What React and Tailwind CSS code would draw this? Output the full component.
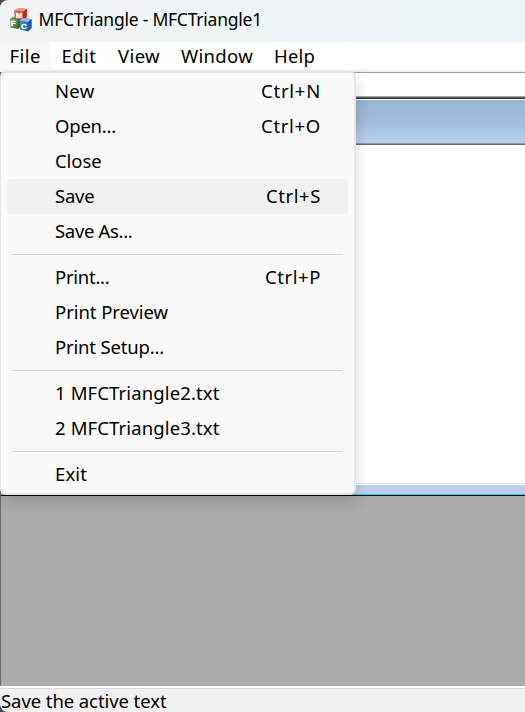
import { useLayoutEffect, useRef, useState } from 'react';

// Label whose letter spacing is adjusted so it occupies a set width.
function Label({ text, width, className = '' }) {
  const ref = useRef(null);
  const [spacing, setSpacing] = useState(0);
  useLayoutEffect(() => {
    const natural = ref.current.getBoundingClientRect().width;
    setSpacing((width - natural) / text.length);
  }, []);
  return (
    <span ref={ref} className={`whitespace-pre ${className}`} style={{ letterSpacing: `${spacing}px` }}>
      {text}
    </span>
  );
}

function AppIcon() {
  return (
    <svg width="24" height="26" viewBox="0 0 24 26" className="shrink-0">
      <defs>
        <linearGradient id="red" x1="0" y1="0" x2="1" y2="1">
          <stop offset="0" stopColor="#e06a52" />
          <stop offset="1" stopColor="#bd2d20" />
        </linearGradient>
        <linearGradient id="green" x1="0" y1="0" x2="1" y2="1">
          <stop offset="0" stopColor="#7cad60" />
          <stop offset="1" stopColor="#2f6428" />
        </linearGradient>
        <linearGradient id="blue" x1="0" y1="0" x2="1" y2="1">
          <stop offset="0" stopColor="#4a90cc" />
          <stop offset="1" stopColor="#1b5794" />
        </linearGradient>
      </defs>
      <path d="M1 11.5 L5 9.5 L12 11 V19 L9 22 L1.5 20.5 Z" fill="url(#green)" />
      <path d="M9 13 L12 11 V19 L9 22 Z" fill="#315e2b" />
      <path d="M5 3.5 L10 1 L18 2 L17.5 10.5 L14 13 L6 12 Z" fill="url(#red)" />
      <path d="M5 3.5 L10 1 L18 2 L14 4.5 Z" fill="#ed9680" />
      <path d="M14 4.5 L18 2 L17.5 10.5 L14 13 Z" fill="#ae2e24" />
      <path d="M10.5 13.5 L14 11 L22.5 12 V21 L19 24.5 L11 22.5 Z" fill="url(#blue)" />
      <path d="M10.5 13.5 L14 11 L22.5 12 L19 15 Z" fill="#8fc1e6" />
      <path d="M19 15 L22.5 12 V21 L19 24.5 Z" fill="#225f9e" />
      <g fill="#fff" stroke="#fff" strokeWidth="0.3" fontFamily="Liberation Sans, sans-serif" fontWeight="700" textAnchor="middle">
        <text x="10.1" y="11" fontSize="8">M</text>
        <text x="4.3" y="19.2" fontSize="8">F</text>
        <text x="14.9" y="21.6" fontSize="8">C</text>
      </g>
    </svg>
  );
}

const groups = [
  [
    { text: 'New', width: 39.5, keys: 'Ctrl+N', keysWidth: 60 },
    { text: 'Open...', width: 61, keys: 'Ctrl+O', keysWidth: 60 },
    { text: 'Close', width: 46.5 },
    { text: 'Save', width: 39.5, keys: 'Ctrl+S', keysWidth: 55, active: true },
    { text: 'Save As...', width: 77.5 },
  ],
  [
    { text: 'Print...', width: 54.5, keys: 'Ctrl+P', keysWidth: 56 },
    { text: 'Print Preview', width: 113 },
    { text: 'Print Setup...', width: 109 },
  ],
  [
    { text: '1 MFCTriangle2.txt', width: 164.5 },
    { text: '2 MFCTriangle3.txt', width: 164.5 },
  ],
  [{ text: 'Exit', width: 32 }],
];

function FileMenu() {
  return (
    <div className="absolute left-0 top-[71px] h-[424px] w-[356px] rounded-md border-2 border-l border-[#e5e5e5] bg-[#f9f9f9] px-[6px] pt-px shadow-[2px_7px_14px_rgba(0,0,0,0.13)]">
      {groups.map((items, g) => (
        <div key={g}>
          {g > 0 && <div className="mx-[5px] my-[5px] h-px bg-[#d7d7d7]" />}
          {items.map((item) => (
            <div
              key={item.text}
              className={`flex h-[35px] items-center justify-between rounded pb-[2px] pl-[48px] pr-[27px] ${item.active ? 'bg-[#f0f0f0]' : ''}`}
            >
              <Label text={item.text} width={item.width} />
              {item.keys && <Label text={item.keys} width={item.keysWidth} />}
            </div>
          ))}
        </div>
      ))}
    </div>
  );
}

export default function App() {
  return (
    <div className="relative flex h-[712px] w-[525px] flex-col overflow-hidden bg-[#454b52] font-['Noto_Sans','Open_Sans',sans-serif] text-[18.5px] leading-[26px] text-black">
      <header className="flex h-[42px] shrink-0 items-center rounded-tl-lg bg-gradient-to-r from-[#f1f4f5] to-[#ebf3f7] pb-[3px] pl-[9px]">
        <AppIcon />
        <Label text="MFCTriangle - MFCTriangle1" width={223.5} className="-mt-px ml-[5.5px] text-[17.5px]" />
      </header>
      <nav className="flex h-[28px] shrink-0 items-center bg-white">
        <div className="flex h-full w-[51px] items-center bg-[#f9f9f9] pl-[9.5px]">
          <Label text="File" width={31.5} />
        </div>
        <div className="w-[67px] pl-[10.5px]"><Label text="Edit" width={35} /></div>
        <div className="w-[63px]"><Label text="View" width={42} /></div>
        <div className="w-[92px]"><Label text="Window" width={72} /></div>
        <div className="pl-px"><Label text="Help" width={41} /></div>
      </nav>
      <div className="h-[2px] shrink-0 bg-[#f0f0f0]" />
      <main className="flex grow flex-col border-l border-[#696969] bg-[#ababab]">
        <div className="h-[24px] border-t border-[#a0a0a0] bg-white" />
        <div className="h-px bg-[#a0a0a0]" />
        <div className="h-px bg-[#696969]" />
        <div className="h-px bg-[#302b2e]" />
        <div className="h-px bg-white" />
        <div className="h-[43px] bg-gradient-to-b from-[#9ab4d2] via-[#a3bbd8] to-[#b7d1ea]" />
        <div className="h-px bg-[#9a9a9a]" />
        <div className="h-px bg-[#6b6565]" />
        <div className="h-[338px] bg-white" />
        <div className="h-px bg-[#e3e3e3]" />
        <div className="h-px bg-white" />
        <div className="h-[9px] bg-[#b9d1ea]" />
        <div className="h-px bg-[#2bd0e8]" />
        <div className="h-px bg-black" />
      </main>
      <footer className="h-[26px] shrink-0 rounded-bl-lg border-t-2 border-white bg-[#f0f0f0]">
        <div className="flex h-full items-center border-t border-[#d7d7d7] pl-px pt-px leading-[22px]">
          <Label text="Save the active text" width={165.5} />
        </div>
      </footer>
      <FileMenu />
    </div>
  );
}
